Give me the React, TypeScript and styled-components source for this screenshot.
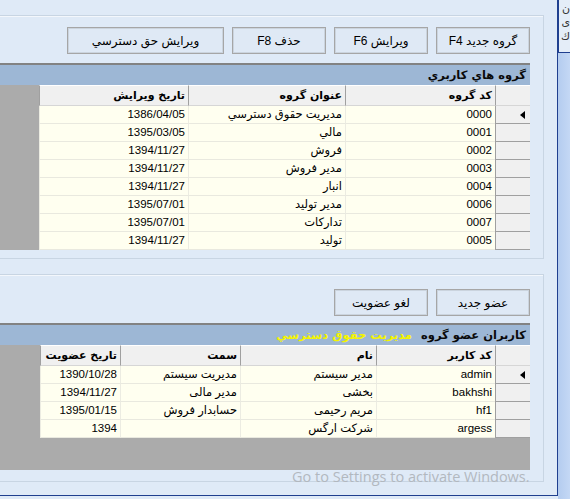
import styled, { createGlobalStyle } from "styled-components";

const GlobalStyle = createGlobalStyle`
  *, *::before, *::after { box-sizing: border-box; }
  html, body { margin: 0; padding: 0; }
  body {
    background: #dfeaf7;
    font-family: "Liberation Sans", "DejaVu Sans", sans-serif;
    font-size: 11px;
    color: #000;
  }
`;

const NAVY = "#1f3f8f";

const Screen = styled.div`
  display: flex;
  width: 570px;
  height: 499px;
  overflow: hidden;
`;

const Window = styled.div`
  position: relative;
  width: 558px;
  height: 496px;
  flex-shrink: 0;
  overflow: hidden;
  direction: rtl;
  display: flex;
  flex-direction: column;
  gap: 15px;
  padding: 15px 13px 0 0;
  border-right: 1px solid ${NAVY};
  border-bottom: 1px solid ${NAVY};
`;

const Side = styled.div`
  flex: 1;
  background: linear-gradient(90deg, #b4ccef 0%, #c4d8f5 100%);
`;

const PeekBox = styled.div`
  height: 53px;
  background: #e4edf8;
  border-left: 1px solid ${NAVY};
  border-bottom: 1px solid ${NAVY};
  overflow: hidden;
  font-family: "DejaVu Sans", sans-serif;
  font-size: 11px;
  line-height: 14px;
  padding: 2px 0 0 2px;
  color: #333;
  direction: rtl;
  white-space: nowrap;
`;

const Frame = styled.section<{ $h: number; $top: number }>`
  height: ${(p) => p.$h}px;
  margin-left: -2px;
  padding: ${(p) => p.$top}px 13px 0 0;
  border: 1px solid #c8d5e3;
  box-shadow: inset 1px 1px 0 #f3f7fc;
  display: flex;
  flex-direction: column;
`;

const ButtonBar = styled.div`
  display: flex;
  gap: 8px;
  height: 27px;
`;

const Button = styled.button<{ $w: number }>`
  width: ${(p) => p.$w}px;
  height: 27px;
  padding: 0;
  background: #dfe9f5;
  border: 1px solid #a6a6a6;
  box-shadow: inset 0 0 0 1px #cbd4de;
  font-family: "Liberation Sans", "DejaVu Sans", sans-serif;
  font-size: 12px;
  color: #000;
  direction: rtl;
`;

const Grid = styled.div<{ $gap: number; $h?: number }>`
  margin-top: ${(p) => p.$gap}px;
  ${(p) => (p.$h ? `height: ${p.$h}px;` : "")}
  flex-shrink: 0;
  background: #ababab;
  border-top: 2px solid #828282;
`;

const TitleBar = styled.div`
  height: 20px;
  background: #9db7d5;
  display: flex;
  align-items: center;
  gap: 9px;
  padding-right: 4px;
  font-family: "DejaVu Sans", sans-serif;
  font-weight: bold;
  font-size: 11.5px;
  color: #0a0a0a;
  white-space: nowrap;
`;

const Highlight = styled.span`
  color: #f4f400;
`;

const Row = styled.div<{ $h: number }>`
  display: flex;
  height: ${(p) => p.$h}px;
`;

const HeadCell = styled.div<{ $w: number }>`
  width: ${(p) => p.$w}px;
  flex-shrink: 0;
  background: #f0f0f0;
  border-top: 1px solid #ffffff;
  border-left: 1px solid #a0a0a0;
  border-bottom: 1px solid #d6d6d6;
  padding-right: 3px;
  line-height: 19px;
  font-family: "DejaVu Sans", sans-serif;
  font-weight: bold;
  font-size: 11px;
  text-align: right;
  white-space: nowrap;
  overflow: hidden;
`;

const Selector = styled.div`
  width: 35px;
  flex-shrink: 0;
  background: #f0f0f0;
  border-left: 1px solid #a0a0a0;
  border-bottom: 1px solid #a0a0a0;
  display: flex;
  align-items: center;
  padding-right: 5px;
`;

const Pointer = styled.span`
  width: 0;
  height: 0;
  border-top: 4px solid transparent;
  border-bottom: 4px solid transparent;
  border-right: 5px solid #000;
`;

const Cell = styled.div<{ $w: number }>`
  width: ${(p) => p.$w}px;
  flex-shrink: 0;
  background: #fffff0;
  border-left: 1px solid #ecece2;
  border-bottom: 1px solid #e9e9df;
  padding-right: 3px;
  line-height: 17px;
  font-size: 11.5px;
  text-align: right;
  white-space: nowrap;
  overflow: hidden;
`;

const Watermark = styled.div`
  position: absolute;
  left: 292px;
  top: 467px;
  direction: ltr;
  font-family: "Open Sans", "Noto Sans", sans-serif;
  font-size: 14.5px;
  color: #b2b8bf;
  white-space: nowrap;
  pointer-events: none;
`;

const groupCols = [150, 157, 149];
const groupHead = ["كد گروه", "عنوان گروه", "تاريخ ويرايش"];
const groups = [
  ["0000", "مديريت حقوق دسترسي", "1386/04/05"],
  ["0001", "مالي", "1395/03/05"],
  ["0002", "فروش", "1394/11/27"],
  ["0003", "مدير فروش", "1394/11/27"],
  ["0004", "انبار", "1394/11/27"],
  ["0006", "مدير توليد", "1395/07/01"],
  ["0007", "تداركات", "1395/07/01"],
  ["0005", "توليد", "1394/11/27"],
];

const userCols = [119, 136, 120, 80];
const userHead = ["كد كاربر", "نام", "سمت", "تاريخ عضويت"];
const users = [
  ["admin", "مدير سيستم", "مديريت سيستم", "1390/10/28"],
  ["bakhshi", "بخشی", "مدير مالی", "1394/11/27"],
  ["hf1", "مريم رحيمی", "حسابدار فروش", "1395/01/15"],
  ["argess", "شركت ارگس", "", "1394"],
];

const Table = ({ cols, head, rows }: { cols: number[]; head: string[]; rows: string[][] }) => (
  <>
    <Row $h={21}>
      <HeadCell $w={35} />
      {head.map((h, i) => (
        <HeadCell key={h} $w={cols[i]}>
          {h}
        </HeadCell>
      ))}
    </Row>
    {rows.map((r, ri) => (
      <Row key={ri} $h={18}>
        <Selector>{ri === 0 && <Pointer />}</Selector>
        {r.map((v, i) => (
          <Cell key={i} $w={cols[i]} dir={/^[\w/]+$/.test(v) ? "ltr" : "rtl"}>
            {v}
          </Cell>
        ))}
      </Row>
    ))}
  </>
);

export default function App() {
  return (
    <>
      <GlobalStyle />
      <Screen>
        <Window>
          <Frame $h={244} $top={11}>
            <ButtonBar>
              <Button $w={94}>گروه جديد F4</Button>
              <Button $w={94}>ويرايش F6</Button>
              <Button $w={94}>حذف F8</Button>
              <Button $w={157}>ويرايش حق دسترسي</Button>
            </ButtonBar>
            <Grid $gap={9}>
              <TitleBar>گروه هاي كاربري</TitleBar>
              <Table cols={groupCols} head={groupHead} rows={groups} />
            </Grid>
          </Frame>
          <Frame $h={208} $top={14}>
            <ButtonBar>
              <Button $w={94}>عضو جديد</Button>
              <Button $w={94}>لغو عضويت</Button>
            </ButtonBar>
            <Grid $gap={7} $h={147}>
              <TitleBar>
                كاربران عضو گروه
                <Highlight>مديريت حقوق دسترسي</Highlight>
              </TitleBar>
              <Table cols={userCols} head={userHead} rows={users} />
            </Grid>
          </Frame>
          <Watermark>Go to Settings to activate Windows.</Watermark>
        </Window>
        <Side>
          <PeekBox>
            ن
            <br />
            ی
            <br />
            ك
          </PeekBox>
        </Side>
      </Screen>
    </>
  );
}
